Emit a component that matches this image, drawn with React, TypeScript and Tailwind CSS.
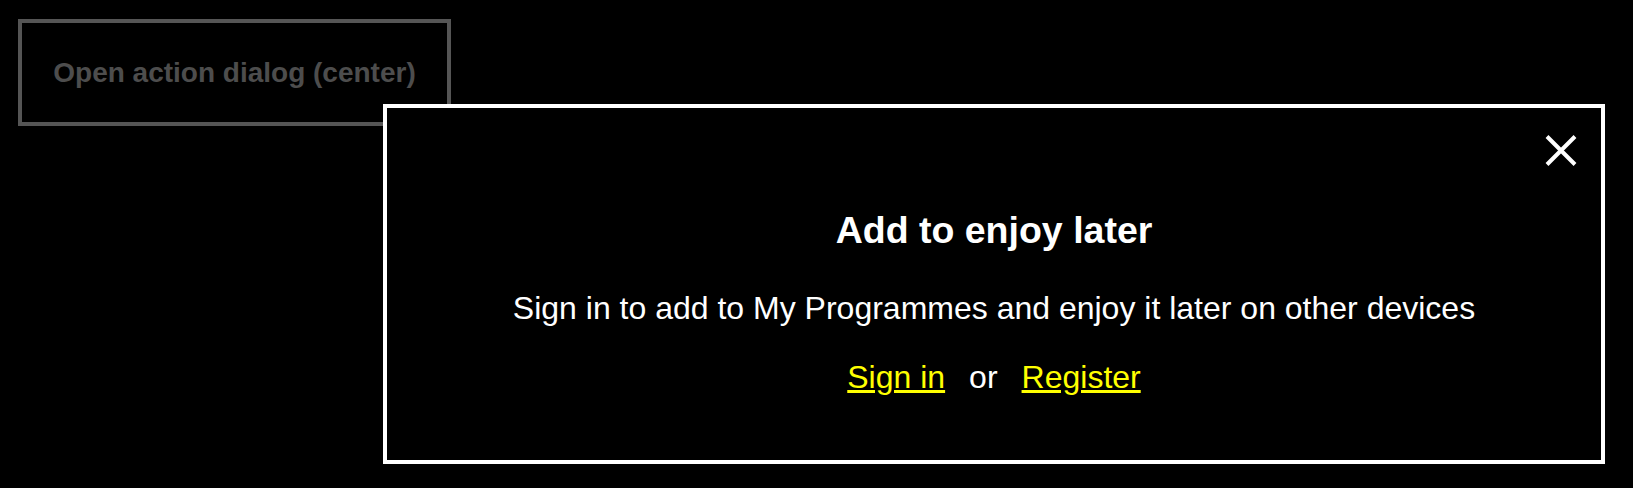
import { useState } from 'react';

function CloseIcon() {
  return (
    <svg width="32" height="33" viewBox="0 0 32 33" fill="none">
      <path d="M2 2.5 L30 30.5 M30 2.5 L2 30.5" stroke="#fff" strokeWidth="4" />
    </svg>
  );
}

export default function App() {
  const [open, setOpen] = useState(true);

  return (
    <div className="relative min-h-screen w-full bg-black font-['Liberation_Sans',Arial,sans-serif]">
      <div className="pt-[19px] pl-[18px]">
        <button
          onClick={() => setOpen(true)}
          className="w-[433px] h-[107px] border-4 border-[#555555] bg-black text-[#4d4d4d] text-[28px] font-bold flex items-center justify-center"
        >
          Open action dialog (center)
        </button>
      </div>

      {open && (
        <div
          role="dialog"
          className="absolute left-[383px] top-[104px] w-[1222px] h-[360px] border-4 border-white bg-black text-white flex flex-col items-center pt-[101px]"
        >
          <button
            onClick={() => setOpen(false)}
            aria-label="Close"
            className="absolute right-[24px] top-[26px]"
          >
            <CloseIcon />
          </button>

          <h2 className="text-[37.5px] font-bold leading-[1.15]">Add to enjoy later</h2>
          <p className="mt-[38px] text-[32px] leading-[1.15]">
            Sign in to add to My Programmes and enjoy it later on other devices
          </p>
          <div className="mt-[32px] flex items-center gap-[24px] text-[32px] leading-[1.15]">
            <a href="#" className="text-[#ffff00] underline">Sign in</a>
            <span>or</span>
            <a href="#" className="text-[#ffff00] underline">Register</a>
          </div>
        </div>
      )}
    </div>
  );
}
